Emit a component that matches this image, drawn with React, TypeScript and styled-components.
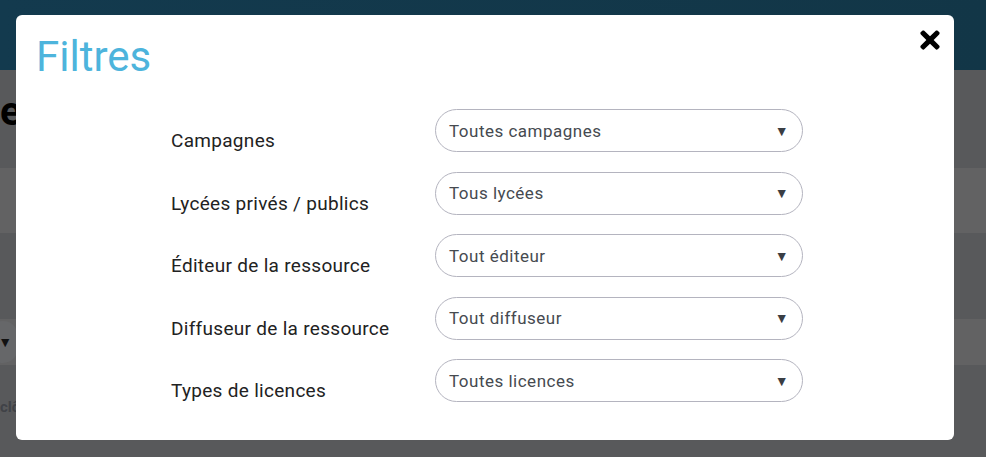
import React from "react";
import styled, { createGlobalStyle } from "styled-components";
import { FaTimes } from "react-icons/fa";

const Global = createGlobalStyle`
  html, body { margin: 0; padding: 0; }
  body {
    font-family: Roboto, "Noto Sans", Arial, sans-serif;
    background: #58595b;
    overflow: hidden;
  }
`;

const Page = styled.div`
  width: 986px;
  height: 457px;
  display: flex;
  flex-direction: column;
  background: #58595b;
`;

const Header = styled.header`
  height: 70px;
  flex: none;
  background: linear-gradient(90deg, #133a4e, #123647);
`;

const TitleZone = styled.div`
  height: 98px;
  display: flex;
  align-items: flex-start;
  padding-top: 22px;
  box-sizing: border-box;
`;

const PageTitle = styled.h1`
  margin: 0;
  font-size: 40px;
  line-height: 1;
  font-weight: 700;
  color: #000;
`;

const Band = styled.div<{ $h: number; $light?: boolean }>`
  height: ${(p) => p.$h}px;
  flex: none;
  background: ${(p) => (p.$light ? "#626263" : "#58595b")};
  display: flex;
  align-items: center;
`;

const Pill = styled.div`
  height: 42px;
  width: 30px;
  margin-left: -12px;
  border-radius: 21px;
  background: #666769;
  color: #111;
  font-size: 14px;
  display: flex;
  align-items: center;
  justify-content: flex-end;
  padding-right: 6px;
  box-sizing: border-box;
`;

const FootBand = styled.div`
  flex: 1;
  background: #58595b;
  padding-top: 32px;
  box-sizing: border-box;
`;

const Faint = styled.span`
  font-size: 15px;
  line-height: 18px;
  font-weight: 700;
  color: #404247;
`;

const Overlay = styled.div`
  position: fixed;
  inset: 0;
`;

const Modal = styled.div`
  position: absolute;
  left: 16px;
  top: 15px;
  width: 938px;
  height: 425px;
  box-sizing: border-box;
  background: #fff;
  border-radius: 6px;
  padding: 15px 20px 38px;
`;

const Title = styled.h2`
  margin: 0;
  font-size: 42px;
  font-weight: 400;
  line-height: 54px;
  color: #4db4dc;
`;

const Close = styled.button`
  position: absolute;
  top: 11px;
  right: 10px;
  border: 0;
  background: none;
  padding: 0;
  color: #000;
  font-size: 28px;
  line-height: 0;
  cursor: pointer;
`;

const Form = styled.div`
  margin: 25px 0 0 135px;
  display: grid;
  grid-template-columns: 264px 368px;
  grid-auto-rows: 43px;
  row-gap: 19.5px;
`;

const Label = styled.label`
  align-self: end;
  padding-bottom: 1px;
  font-size: 19px;
  letter-spacing: 0.3px;
  line-height: 21px;
  color: #222;
`;

const SelectBox = styled.div`
  display: flex;
  align-items: center;
  justify-content: space-between;
  border: 1px solid #b4b4bf;
  border-radius: 22px;
  padding: 0 13px 0 13px;
  font-size: 17px;
  letter-spacing: 0.5px;
  color: #464a50;
`;

const Arrow = styled.span`
  font-size: 14px;
  color: #3a3e44;
`;

const filters = [
  ["Campagnes", "Toutes campagnes"],
  ["Lycées privés / publics", "Tous lycées"],
  ["Éditeur de la ressource", "Tout éditeur"],
  ["Diffuseur de la ressource", "Tout diffuseur"],
  ["Types de licences", "Toutes licences"],
];

export default function App() {
  return (
    <>
      <Global />
      <Page>
        <Header />
        <TitleZone>
          <PageTitle>e</PageTitle>
        </TitleZone>
        <Band $h={65} $light />
        <Band $h={86} />
        <Band $h={46} $light>
          <Pill>▼</Pill>
        </Band>
        <FootBand>
          <Faint>clô</Faint>
        </FootBand>
      </Page>
      <Overlay>
        <Modal>
          <Title>Filtres</Title>
          <Close aria-label="Fermer">
            <FaTimes />
          </Close>
          <Form>
            {filters.map(([label, value]) => (
              <React.Fragment key={label}>
                <Label>{label}</Label>
                <SelectBox>
                  <span>{value}</span>
                  <Arrow>▼</Arrow>
                </SelectBox>
              </React.Fragment>
            ))}
          </Form>
        </Modal>
      </Overlay>
    </>
  );
}
